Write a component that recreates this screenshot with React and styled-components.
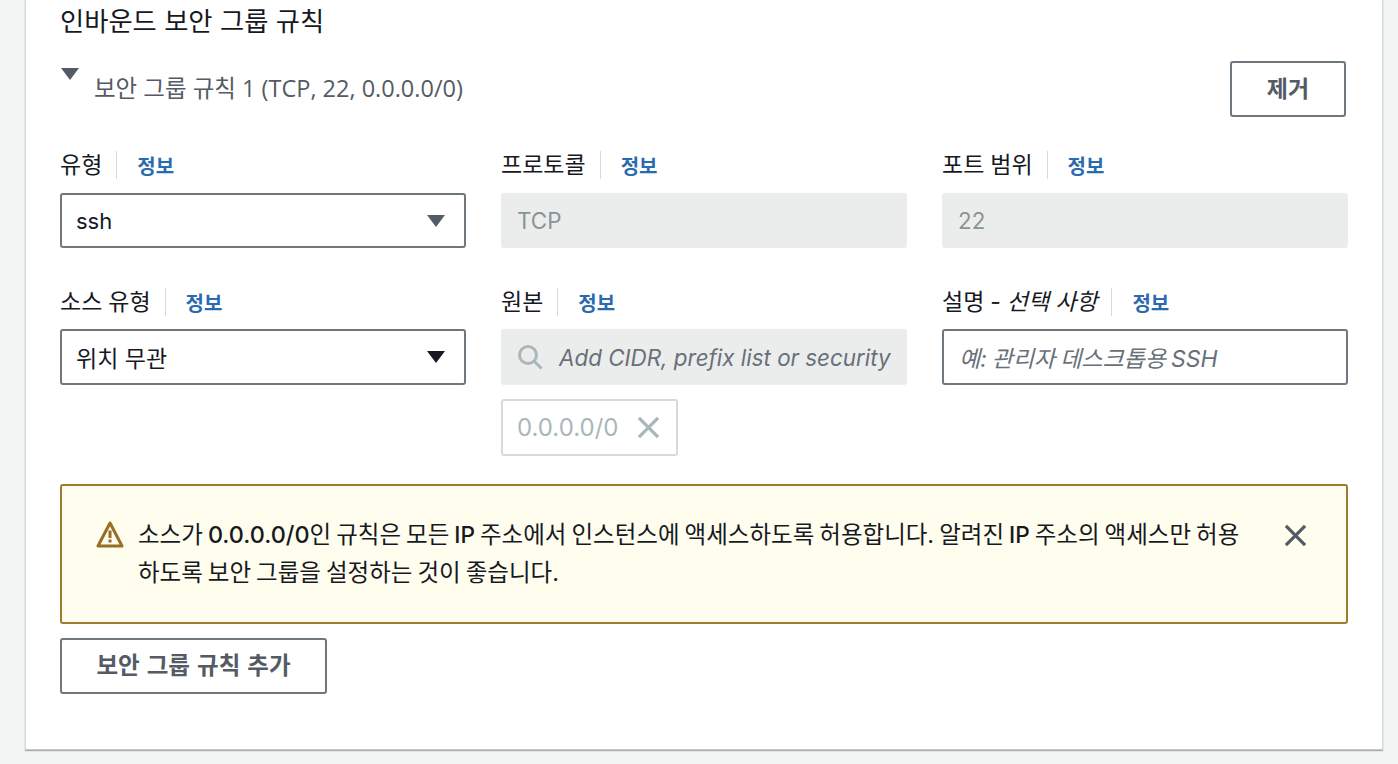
import React from 'react';
import styled, { createGlobalStyle } from 'styled-components';

const Stack = `Inter, "Noto Sans CJK KR", sans-serif`;

const Global = createGlobalStyle`
  html, body { margin: 0; padding: 0; background: #f2f3f3; height: 764px; overflow: hidden; }
  * { box-sizing: border-box; }
  body { font-family: ${Stack}; color: #16191f; }
`;
const Page = styled.div`
  padding: 0 15px 14px 25px;
`;
const Panel = styled.section`
  background: #fff;
  height: 750px;
  padding: 5px 34px 0 34px;
  border-left: 1px solid #d5dbdb;
  border-right: 1px solid #d5dbdb;
  border-bottom: 1px solid #c0c8c8;
  box-shadow: 0 1px 1px rgba(0,28,36,.3);
`;
const Title = styled.h2`
  margin: 0;
  font-size: 26.3px;
  line-height: 34px;
  font-weight: 400;
  height: 56px;
`;
const RuleHeader = styled.div`
  display: flex;
  justify-content: space-between;
  align-items: flex-start;
  height: 90px;
  padding-right: 2px;
`;
const RuleName = styled.div`
  display: flex;
  align-items: flex-start;
  gap: 14px;
  font-family: "Open Sans", "Noto Sans CJK KR", sans-serif;
  font-size: 23.5px;
  line-height: 32px;
  color: #545b64;
  padding-top: 11px;
`;
const Caret = styled.svg`
  width: 20px;
  height: 14px;
  margin-top: ${p => p.$mt || 0}px;
  fill: ${p => p.$color || '#545b64'};
  flex: none;
`;
const Button = styled.button`
  display: block;
  background: #fff;
  border: 2px solid #6f777f;
  border-radius: 3px;
  color: #545b64;
  font: 700 ${p => p.$size || 23}px/32px ${Stack};
  word-spacing: ${p => p.$spacing || 0}px;
  width: ${p => p.$width}px;
  height: 56px;
  padding: 0;
  text-align: center;
`;
const Row = styled.div`
  --label-gap: ${p => p.$labelGap}px;
  --control-height: ${p => p.$control}px;
  display: grid;
  grid-template-columns: 406px 406px 406px;
  column-gap: 35px;
  margin-bottom: ${p => p.$mb || 0}px;
`;
const Field = styled.div`
  display: flex;
  flex-direction: column;
  align-items: stretch;
`;
const Label = styled.div`
  display: flex;
  align-items: center;
  height: 28px;
  margin-bottom: var(--label-gap);
  font-size: 23px;
  line-height: 28px;
  word-spacing: -0.5px;
  white-space: pre;
  em { font-style: italic; }
`;
const Info = styled.a`
  margin-left: 14px;
  padding: 4px 0 0 20px;
  border-left: 1px solid #d5dbdb;
  color: #2a6ab0;
  font-size: 20px;
  font-weight: 700;
  line-height: 24px;
`;
const Select = styled.div`
  display: flex;
  align-items: center;
  justify-content: space-between;
  height: var(--control-height);
  padding: 0 18px 0 14px;
  background: #fff;
  border: 2px solid #6f777f;
  border-radius: 3px;
  font-size: 23px;
`;
const Latin = styled.span`
  font-size: ${p => p.$size}px;
  font-weight: ${p => p.$weight || 400};
`;
const Disabled = styled.div`
  display: flex;
  align-items: center;
  height: var(--control-height);
  padding: 0 16px;
  gap: 16px;
  background: #ebeded;
  border-radius: 3px;
  color: #879596;
  font-size: 22.4px;
  white-space: nowrap;
  overflow: hidden;
`;
const Placeholder = styled.span`
  font-style: italic;
  color: #687078;
`;
const TextInput = styled.div`
  display: flex;
  align-items: center;
  height: var(--control-height);
  padding: 0 15px;
  background: #fff;
  border: 2px solid #6f777f;
  border-radius: 3px;
  font-size: 23px;
  word-spacing: -1.5px;
  font-style: italic;
  color: #687078;
`;
const Token = styled.div`
  display: inline-flex;
  align-items: center;
  align-self: flex-start;
  gap: 19px;
  height: 57px;
  margin-top: 14px;
  padding: 0 16px 0 14px;
  border: 2px solid #d5dbdb;
  border-radius: 3px;
  font-size: 24px;
  color: #aab7b8;
`;
const Alert = styled.div`
  display: flex;
  align-items: flex-start;
  height: 140px;
  margin-bottom: 14px;
  padding: 30px 39px 0 34px;
  background: #fffdee;
  border: 2px solid #a07a2e;
  border-radius: 3px;
`;
const AlertText = styled.div`
  flex: 1;
  margin: 0 30px 0 14px;
  font-size: 23.5px;
  line-height: 38px;
  word-spacing: -1.6px;
  color: #16191f;
`;
const AlertLine = styled.div`
  white-space: nowrap;
  height: 37.5px;
`;
const Icon = styled.svg`
  flex: none;
  display: block;
  margin-top: ${p => p.$mt || 0}px;
`;

const Down = ({ color, mt }) => (
  <Caret $color={color} $mt={mt} viewBox="0 0 20 14"><path d="M1 1h18L10 13z" /></Caret>
);
const X = ({ color, size, mt }) => (
  <Icon width={size} height={size} viewBox="0 0 24 24" fill="none" stroke={color} strokeWidth="3.4" $mt={mt}>
    <path d="M2 2l20 20M22 2L2 22" />
  </Icon>
);
const FieldLabel = ({ children }) => (
  <Label>{children}<Info>정보</Info></Label>
);

export default function App() {
  return (
    <Page>
      <Global />
      <Panel>
        <Title>인바운드 보안 그룹 규칙</Title>
        <RuleHeader>
          <RuleName><Down mt={-5} />보안 그룹 규칙 1 (TCP, 22, 0.0.0.0/0)</RuleName>
          <Button $width={116}>제거</Button>
        </RuleHeader>
        <Row $mb={40} $labelGap={14} $control={55}>
          <Field>
            <FieldLabel>유형</FieldLabel>
            <Select><Latin $size={22}>ssh</Latin><Down /></Select>
          </Field>
          <Field>
            <FieldLabel>프로토콜</FieldLabel>
            <Disabled>TCP</Disabled>
          </Field>
          <Field>
            <FieldLabel>포트 범위</FieldLabel>
            <Disabled>22</Disabled>
          </Field>
        </Row>
        <Row $mb={28} $labelGap={13} $control={56}>
          <Field>
            <FieldLabel>소스 유형</FieldLabel>
            <Select>위치 무관<Down color="#16191f" /></Select>
          </Field>
          <Field>
            <FieldLabel>원본</FieldLabel>
            <Disabled>
              <Icon width="26" height="26" viewBox="0 0 26 26" fill="none" stroke="#aab7b8" strokeWidth="3">
                <circle cx="11" cy="11" r="8.5" /><path d="M17 17l7.5 7.5" />
              </Icon>
              <Placeholder>Add CIDR, prefix list or security</Placeholder>
            </Disabled>
            <Token>0.0.0.0/0<X color="#aab7b8" size={23} /></Token>
          </Field>
          <Field>
            <FieldLabel>설명 - <em>선택 사항</em></FieldLabel>
            <TextInput>예: 관리자 데스크톱용 SSH</TextInput>
          </Field>
        </Row>
        <Alert>
          <Icon width="28" height="28" viewBox="0 0 28 28" $mt={4} fill="none">
            <path d="M14 3L2 26h24z" stroke="#956f25" strokeWidth="3" strokeLinejoin="round" />
            <path d="M14 10.5v7.5M14 19.5v3" stroke="#956f25" strokeWidth="3" />
          </Icon>
          <AlertText>
            <AlertLine>소스가 <Latin $size={23.4} $weight={500}>0.0.0.0/0</Latin>인 규칙은 모든 <Latin $size={22.6} $weight={500}>IP</Latin> 주소에서 인스턴스에 액세스하도록 허용합니다. 알려진 <Latin $size={22.6} $weight={500}>IP</Latin> 주소의 액세스만 허용</AlertLine>
            <AlertLine>하도록 보안 그룹을 설정하는 것이 좋습니다.</AlertLine>
          </AlertText>
          <X color="#545b64" size={23} mt={8} />
        </Alert>
        <Button $width={267} $size={23.5} $spacing={1.5}>보안 그룹 규칙 추가</Button>
      </Panel>
    </Page>
  );
}
